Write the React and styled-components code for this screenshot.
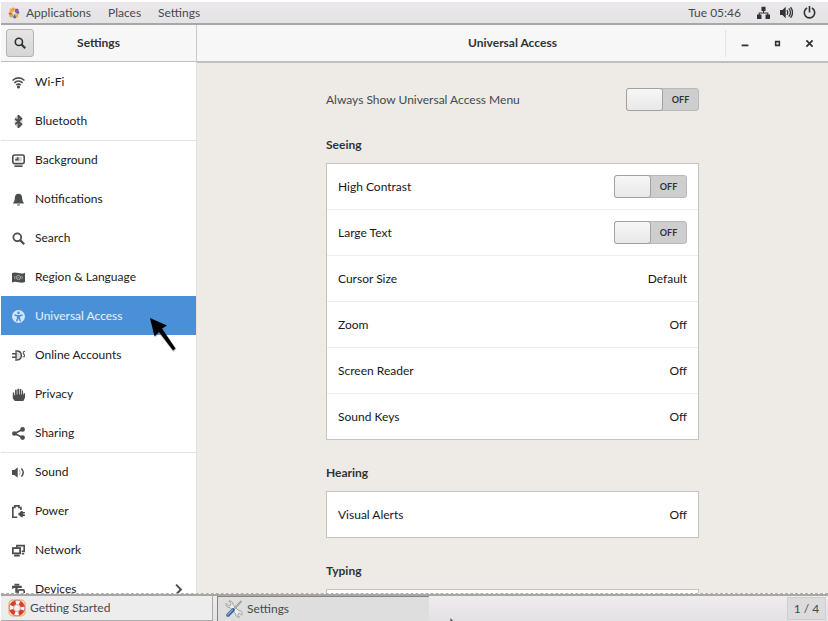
import React, { useState } from "react";
import styled, { createGlobalStyle, css } from "styled-components";

const GlobalStyle = createGlobalStyle`
  *, *::before, *::after { box-sizing: border-box; }
  body { margin: 0; background: #fff; }
  button, input { font: inherit; color: inherit; }
  button { border: 0; padding: 0; background: none; text-align: left; }
`;

const Desktop = styled.div`
  display: flex;
  flex-direction: column;
  height: 100vh;
  padding: 2px 0 0 1px;
  overflow: hidden;
  position: relative;
  font-family: Lato, "Noto Sans", sans-serif;
  font-size: 12px;
  line-height: 16px;
  color: #2e3436;
`;

const TopBar = styled.header`
  display: flex;
  justify-content: space-between;
  align-items: center;
  flex: none;
  height: 23px;
  padding: 0 12px 0 7px;
  background: linear-gradient(#ebe7eb, #e5e3e6);
  border-bottom: 2px solid #a9a6a6;
  color: #444a4d;
`;

const MenuGroup = styled.nav`
  display: flex;
  align-items: center;
  gap: 17px;
`;

const MenuButton = styled.button`
  display: flex;
  align-items: center;
  gap: 6px;
`;

const StatusGroup = styled.div`
  display: flex;
  align-items: center;
  gap: 10px;
  color: #2e3436;
`;

const Clock = styled.time`
  margin-right: 6px;
  color: #444a4d;
`;

const IconButton = styled.button`
  display: grid;
  place-items: center;
`;

const HeaderBar = styled.div`
  display: flex;
  flex: none;
  height: 38px;
  background: #f7f7f7;
  border-bottom: 2px solid #c0bec0;
`;

const SideHeader = styled.div`
  display: grid;
  grid-template-columns: 28px 1fr 28px;
  align-items: center;
  flex: none;
  width: 196px;
  padding: 0 5px;
  border-right: 1px solid #c9c9c9;
`;

const MainHeader = styled.div`
  display: grid;
  grid-template-columns: 103px 1fr 103px;
  align-items: center;
  flex: 1;
`;

const Title = styled.h1`
  margin: 0;
  font-size: 12px;
  font-weight: 700;
  text-align: center;
`;

const SearchButton = styled.button`
  display: grid;
  place-items: center;
  width: 28px;
  height: 28px;
  border: 1px solid #b4b4b4;
  border-radius: 3px;
  background: linear-gradient(#e6e4e5, #d7d6d7);
`;

const WindowControls = styled.div`
  display: grid;
  grid-template-columns: repeat(3, 32px);
  grid-column: 3;
  justify-content: center;
  height: 27px;
  border-left: 1px solid #e4e4e4;
`;

const Body = styled.div`
  display: flex;
  flex: 1;
  min-height: 0;
  border-bottom: 1px dashed #b3b1ae;
`;

const Sidebar = styled.nav`
  flex: none;
  width: 196px;
  margin-top: -1px;
  overflow: hidden;
  background: #fff;
  border-right: 1px solid #e3e1dd;
`;

const SideItem = styled.button`
  display: flex;
  align-items: center;
  gap: 10px;
  width: 100%;
  height: 39px;
  padding: 0 11px;
  color: #1d2021;
  border-top: 1px solid ${(p) => (p.$divided ? "#e2e2e2" : "transparent")};
  svg { color: #4b4e4f; }
  span { flex: 1; }
  ${(p) =>
    p.$active &&
    css`
      background: #4a90d9;
      border-color: #4a90d9;
      color: #e9f1fa;
      svg { color: #d5e5f6; }
    `}
`;

const Main = styled.main`
  display: flex;
  justify-content: center;
  flex: 1;
  overflow: hidden;
  padding: 24px 24px 0;
  background: #eeebe6;
`;

const Column = styled.div`
  width: 100%;
  max-width: 373px;
`;

const TopSetting = styled.div`
  display: flex;
  justify-content: space-between;
  align-items: center;
  height: 25px;
  color: #42494b;
`;

const Section = styled.section`
  margin-top: 25px;
`;

const SectionTitle = styled.h2`
  margin: 0 0 10px;
  font-size: 12px;
  line-height: 16px;
  font-weight: 700;
`;

const Panel = styled.div`
  min-height: 47px;
  background: #fff;
  border: 1px solid #c5c4c1;
`;

const rowStyle = css`
  display: flex;
  justify-content: space-between;
  align-items: center;
  width: 100%;
  height: 46px;
  padding: 0 11px;
  color: #161819;
  border-bottom: 1px solid #ececeb;
  &:last-child { border-bottom: 0; height: 45px; }
`;

const SwitchRow = styled.div`${rowStyle}`;
const ValueRow = styled.button`${rowStyle}`;

const SwitchLabel = styled.label`
  display: grid;
  grid-template-columns: 36px 1fr;
  width: 73px;
  height: 23px;
  border: 1px solid #b9b9b8;
  border-radius: 3px;
  background: #cecece;
  font-size: 9px;
  line-height: 21px;
  font-weight: 700;
  text-align: center;
  color: #2e3436;
  position: relative;
`;

const SwitchInput = styled.input`
  position: absolute;
  inset: 0;
  margin: 0;
  opacity: 0;
`;

const Knob = styled.span`
  order: ${(p) => (p.$on ? 2 : 0)};
  margin: -1px 0 -1px -1px;
  border: 1px solid #a1a1a0;
  border-radius: 3px;
  background: linear-gradient(#f8f7f8, #e9e8e9);
`;

const TaskBar = styled.footer`
  display: flex;
  align-items: stretch;
  gap: 4px;
  flex: none;
  height: 27px;
  border-top: 2px solid #a9a7a6;
  background: linear-gradient(#f0ebef, #e4e1e4);
  color: #444a4d;
`;

const Task = styled.button`
  display: flex;
  align-items: center;
  gap: 4px;
  flex: 0 1 212px;
  padding-left: 7px;
  background: ${(p) => (p.$active ? "#dedede" : "#eeedee")};
  border: solid ${(p) => (p.$active ? "#858585" : "#aaa")};
  border-width: ${(p) => (p.$active ? "1px 0 0 1px" : "0 1px 1px 0")};
`;

const Pager = styled.button`
  flex: none;
  width: 39px;
  margin: 1px 2px 1px auto;
  border: 1px solid #cfcdcf;
  background: #dddcdd;
  font-size: 12px;
  text-align: center;
`;

const PointerArrow = styled.svg`
  position: absolute;
  left: 147px;
  top: 315px;
  pointer-events: none;
`;

const EdgePointer = styled.svg`
  position: absolute;
  left: 449px;
  bottom: 0;
  pointer-events: none;
`;

const glyphs = {
  wifi: (
    <g fill="none" stroke="currentColor" strokeWidth="2">
      <path d="M.6 5.600C5 1.200 11 1.200 15.400 5.600M3 8.400c2.900-2.900 7.100-2.900 10 0M5.300 11.200c1.600-1.600 3.800-1.600 5.400 0" />
      <circle cx="8" cy="13.600" r="1.900" fill="currentColor" stroke="none" />
    </g>
  ),
  bluetooth: (
    <>
      <path d="M8 0.500c3.600 0 5 2.800 5 7.500s-1.400 7.500-5 7.500S3 12.700 3 8s1.400-7.500 5-7.500z" fill="currentColor" opacity="0.250" />
      <path d="M4 4.500l7.500 7L8 15V1l3.500 3.500L4 11.500" fill="none" stroke="currentColor" strokeWidth="2.200" />
    </>
  ),
  background: (
    <>
      <rect x="1" y="1.200" width="14" height="10.600" rx="2" fill="none" stroke="currentColor" strokeWidth="2" />
      <path d="M4 4h8v5H4z" fill="currentColor" opacity="0.300" />
      <path d="M4 6h2V4h2v4H4z" fill="currentColor" />
      <path d="M3 14h10v2H3z" fill="currentColor" />
    </>
  ),
  bell: <path d="M8 1c3.200 0 4.300 2.200 4.500 5 .2 3 .8 4.600 2.500 7H1c1.700-2.400 2.300-4 2.500-7C3.700 3.200 4.800 1 8 1zM6 14h4c-.3 2-3.700 2-4 0z" fill="currentColor" />,
  search: (
    <g fill="none" stroke="currentColor" strokeWidth="2.200">
      <circle cx="6.500" cy="6.500" r="4.800" />
      <path d="M10 10l5 5" strokeWidth="2.800" />
    </g>
  ),
  flag: (
    <>
      <path d="M0 2.500c3-1.300 5-.8 8 0s5 .8 8-.5v11.500c-3 1.300-5 1.100-8 .4s-5-1-8 .3z" fill="currentColor" />
      <g fill="none" stroke="#fff" strokeWidth="0.900" opacity="0.700">
        <circle cx="8" cy="8" r="2.600" />
        <path d="M4 6c-.9 1.200-.9 2.800 0 4M12 6c.9 1.200.9 2.800 0 4M7 8h2" />
      </g>
    </>
  ),
  access: (
    <>
      <circle cx="8" cy="8" r="8" fill="currentColor" />
      <circle cx="8" cy="3.500" r="1.600" fill="#4a90d9" />
      <path d="M3 5.300l3.800.7h2.400l3.800-.7v1.700l-3.100.9v1.800l1.400 4-1.700.5L8 10.600l-1.600 3.600-1.700-.5 1.400-4V7.900L3 7z" fill="#4a90d9" />
    </>
  ),
  online: (
    <>
      <path d="M4 2.500h2c4 0 5.500 2.500 5.500 5.500S10 13.500 6 13.500H4z" fill="currentColor" opacity="0.200" />
      <path d="M4 2.500h2c4 0 5.500 2.500 5.500 5.500S10 13.500 6 13.500H4M0 5.800h5M0 10.200h5M5 4v8" fill="none" stroke="currentColor" strokeWidth="1.700" />
      <path d="M16 3h-2v3.500h1.500v3H13" fill="none" stroke="currentColor" strokeWidth="1.200" />
    </>
  ),
  hand: <path d="M1 5.500h1.800V9h1V2h2v6h.8V.8h2V8h.8V1.200h2V8h.8V3h1.300v5l.6 1V6.500H16V12l-2 4H3.500L1 13z" fill="currentColor" />,
  share: (
    <>
      <path d="M13 3L3 8l10 5" fill="none" stroke="currentColor" strokeWidth="2" />
      <circle cx="13" cy="3" r="2.900" fill="currentColor" />
      <circle cx="2.900" cy="8" r="2.900" fill="currentColor" />
      <circle cx="13" cy="13" r="2.900" fill="currentColor" />
    </>
  ),
  sound: (
    <>
      <path d="M0 5h3l4-3.500v13L3 11H0z" fill="currentColor" />
      <path d="M9 5c1.300 2 1.300 4 0 6" fill="none" stroke="currentColor" strokeWidth="1.200" opacity="0.500" />
      <path d="M11.500 3c2.800 3 2.800 7 0 10" fill="none" stroke="currentColor" strokeWidth="1.800" />
    </>
  ),
  power: (
    <>
      <path d="M6.500 15H1V3h2.500V1h5v2H11v3" fill="none" stroke="currentColor" strokeWidth="2" />
      <path d="M8 9.500h1.500L11 7.500h2V8.500h3v1.700h-2v1.600h2v1.700h-3v1.500h-2l-1.500-2H8z" fill="currentColor" />
    </>
  ),
  network: (
    <>
      <path d="M6 5V2h9v7h-3M12 12h3" fill="none" stroke="currentColor" strokeWidth="2" />
      <rect x="1" y="5" width="9" height="6.500" fill="none" stroke="currentColor" strokeWidth="2.200" />
      <path d="M3 13h6l1 2.500H2z" fill="currentColor" />
    </>
  ),
  devices: (
    <>
      <path d="M3 1h6v2H3zM0 3.500h12V6H7v6H4V6H2v1H0z" fill="currentColor" />
      <rect x="7.500" y="8.500" width="7.500" height="5.500" rx="1.500" fill="#fff" stroke="currentColor" strokeWidth="2" />
    </>
  ),
  chevron: <path d="M5 2l6 6-6 6" fill="none" stroke="currentColor" strokeWidth="2.400" />,
  lan: (
    <>
      <path d="M5.500 1h5v5h-5zM0 10.500h5.500V16H0zM10.500 10.500H16V16h-5.500z" fill="currentColor" />
      <path d="M8 6v2.500M2.700 11V8.500h10.600V11" fill="none" stroke="currentColor" strokeWidth="1.300" />
    </>
  ),
  volume: (
    <>
      <path d="M0 5h3l4-4v14l-4-4H0z" fill="currentColor" />
      <path d="M8.500 5.200c1.300 1.800 1.300 3.800 0 5.600M10.800 3c2.500 3 2.500 7 0 10M13 1.500c3.200 3.800 3.200 9.200 0 13" fill="none" stroke="currentColor" strokeWidth="1.600" />
    </>
  ),
  shutdown: <path d="M5 2.500a6.400 6.400 0 1 0 6 0M8 0v8" fill="none" stroke="currentColor" strokeWidth="2" />,
  minimize: <path d="M3.500 10h9v2.400h-9z" fill="currentColor" />,
  maximize: <path d="M4.700 4.700h6.600v6.600H4.700z" fill="none" stroke="currentColor" strokeWidth="2.800" />,
  close: <path d="M3.500 3.500l9 9M12.500 3.500l-9 9" fill="none" stroke="currentColor" strokeWidth="2.600" />,
};

function Icon({ name, size = 13 }) {
  return (
    <svg width={size} height={size} viewBox="0 0 16 16" aria-hidden="true">
      {glyphs[name]}
    </svg>
  );
}

function DistroLogo() {
  return (
    <svg width="12" height="12" viewBox="0 0 24 24" aria-hidden="true">
      <g>
        <path d="M11 10L7 2l5-1 2 3z" fill="#e9a12c" />
        <path d="M13 10l2-7 6 1-1 5z" fill="#a0479c" />
        <path d="M14 11l7-4 2 5-3 2z" fill="#6c5cae" />
        <path d="M14 13l7 2-1 6-5-1z" fill="#e8b23a" />
        <path d="M13 14l4 8-5 1-2-3z" fill="#7c4fa0" />
        <path d="M11 14l-2 7-6-1 1-5z" fill="#9dc23e" />
        <path d="M10 13l-7 4-2-5 3-2z" fill="#e0663a" />
        <path d="M10 11L3 9l1-6 5 1z" fill="#e9a84a" />
      </g>
    </svg>
  );
}

function LifebuoyIcon() {
  return (
    <svg width="18" height="18" viewBox="0 0 18 18" aria-hidden="true">
      <rect x="1" y="1" width="16" height="16" rx="4" fill="none" stroke="#e6ba7c" strokeWidth="1.400" />
      <circle cx="9" cy="9" r="5.700" fill="none" stroke="#f4f2f0" strokeWidth="4.400" />
      <circle cx="9" cy="9" r="5.700" fill="none" stroke="#dd3b2e" strokeWidth="4.200" strokeDasharray="4.900 4.053" strokeDashoffset="-2.030" />
      <circle cx="9" cy="9" r="7.800" fill="none" stroke="#c6453a" strokeWidth="0.600" />
      <circle cx="9" cy="9" r="3.400" fill="#f2efee" stroke="#c98078" strokeWidth="0.600" />
    </svg>
  );
}

function ToolsIcon() {
  return (
    <svg width="18" height="18" viewBox="0 0 18 18" aria-hidden="true">
      <path d="M1 3.500L3.500 6l2-.5.5-2L3.800 1C6 .6 8 2 8 4.600l5.500 6c2-.4 3.800 1 3.800 3.200l-.6 1.200-2-1.800-1.500.6-.3 1.600 1.600 1.700c-2.200.5-4.200-1-3.900-3.500L5 7.600C2.800 8 .8 6.300 1 3.500z" fill="#efefec" stroke="#969894" strokeWidth="0.900" />
      <path d="M16.500 1L8 10" stroke="#777a76" strokeWidth="1.800" />
      <path d="M16.500 1L8.500 9.500" stroke="#dedfdb" strokeWidth="0.700" />
      <path d="M8 10L3 15" stroke="#34609c" strokeWidth="3.600" strokeLinecap="round" />
      <path d="M7.400 10l-4.600 4.600" stroke="#7ea3d3" strokeWidth="1.500" strokeLinecap="round" />
    </svg>
  );
}

function Switch({ label }) {
  const [on, setOn] = useState(false);
  return (
    <SwitchLabel>
      <SwitchInput type="checkbox" role="switch" aria-label={label} checked={on} onChange={() => setOn(!on)} />
      <Knob $on={on} />
      <span>{on ? "ON" : "OFF"}</span>
    </SwitchLabel>
  );
}

const sections = [
  { icon: "wifi", label: "Wi-Fi" },
  { icon: "bluetooth", label: "Bluetooth" },
  { icon: "background", label: "Background", divided: true },
  { icon: "bell", label: "Notifications" },
  { icon: "search", label: "Search" },
  { icon: "flag", label: "Region & Language" },
  { icon: "access", label: "Universal Access", active: true },
  { icon: "online", label: "Online Accounts" },
  { icon: "hand", label: "Privacy" },
  { icon: "share", label: "Sharing" },
  { icon: "sound", label: "Sound", divided: true },
  { icon: "power", label: "Power" },
  { icon: "network", label: "Network" },
  { icon: "devices", label: "Devices", submenu: true },
];

const seeing = [
  ["Cursor Size", "Default"],
  ["Zoom", "Off"],
  ["Screen Reader", "Off"],
  ["Sound Keys", "Off"],
];

function Value({ label, value }) {
  return (
    <ValueRow type="button">
      <span>{label}</span>
      <span>{value}</span>
    </ValueRow>
  );
}

export default function App() {
  return (
    <Desktop>
      <GlobalStyle />
      <TopBar>
        <MenuGroup aria-label="Desktop">
          <MenuButton type="button"><DistroLogo />Applications</MenuButton>
          <MenuButton type="button">Places</MenuButton>
          <MenuButton type="button">Settings</MenuButton>
        </MenuGroup>
        <StatusGroup>
          <Clock>Tue 05:46</Clock>
          <IconButton type="button" aria-label="Wired network"><Icon name="lan" /></IconButton>
          <IconButton type="button" aria-label="Volume"><Icon name="volume" /></IconButton>
          <IconButton type="button" aria-label="Power"><Icon name="shutdown" /></IconButton>
        </StatusGroup>
      </TopBar>

      <HeaderBar>
        <SideHeader>
          <SearchButton type="button" aria-label="Search settings"><Icon name="search" size={12} /></SearchButton>
          <Title>Settings</Title>
        </SideHeader>
        <MainHeader>
          <span />
          <Title>Universal Access</Title>
          <WindowControls>
            <IconButton type="button" aria-label="Minimize"><Icon name="minimize" size={12} /></IconButton>
            <IconButton type="button" aria-label="Maximize"><Icon name="maximize" size={9} /></IconButton>
            <IconButton type="button" aria-label="Close"><Icon name="close" size={11} /></IconButton>
          </WindowControls>
        </MainHeader>
      </HeaderBar>

      <Body>
        <Sidebar aria-label="Settings">
          {sections.map((s) => (
            <SideItem key={s.label} type="button" $active={s.active} $divided={s.divided} aria-current={s.active ? "page" : undefined}>
              <Icon name={s.icon} />
              <span>{s.label}</span>
              {s.submenu && <Icon name="chevron" />}
            </SideItem>
          ))}
        </Sidebar>
        <Main>
          <Column>
            <TopSetting>
              <span>Always Show Universal Access Menu</span>
              <Switch label="Always Show Universal Access Menu" />
            </TopSetting>
            <Section>
              <SectionTitle>Seeing</SectionTitle>
              <Panel>
                <SwitchRow><span>High Contrast</span><Switch label="High Contrast" /></SwitchRow>
                <SwitchRow><span>Large Text</span><Switch label="Large Text" /></SwitchRow>
                {seeing.map(([label, value]) => <Value key={label} label={label} value={value} />)}
              </Panel>
            </Section>
            <Section>
              <SectionTitle>Hearing</SectionTitle>
              <Panel><Value label="Visual Alerts" value="Off" /></Panel>
            </Section>
            <Section>
              <SectionTitle>Typing</SectionTitle>
              <Panel />
            </Section>
          </Column>
        </Main>
      </Body>

      <TaskBar>
        <Task type="button"><LifebuoyIcon />Getting Started</Task>
        <Task type="button" $active><ToolsIcon />Settings</Task>
        <Pager type="button" aria-label="Workspace 1 of 4">1 / 4</Pager>
      </TaskBar>

      <PointerArrow width="32" height="40" viewBox="0 0 32 40" aria-hidden="true">
        <path d="M4 4L20 11l-4 3.500L29.500 34l-3 3.200L12 18.500l-3.500 4z" fill="#777" opacity="0.400" />
        <path d="M3 3l17 7.500-5 3L28.500 33.500l-2.500 2L12 17l-4.500 4.500z" fill="#000" />
      </PointerArrow>
      <EdgePointer width="5" height="3" viewBox="0 0 5 3" aria-hidden="true">
        <path d="M1.500 0L4 3H1.500z" fill="#444" />
      </EdgePointer>
    </Desktop>
  );
}
